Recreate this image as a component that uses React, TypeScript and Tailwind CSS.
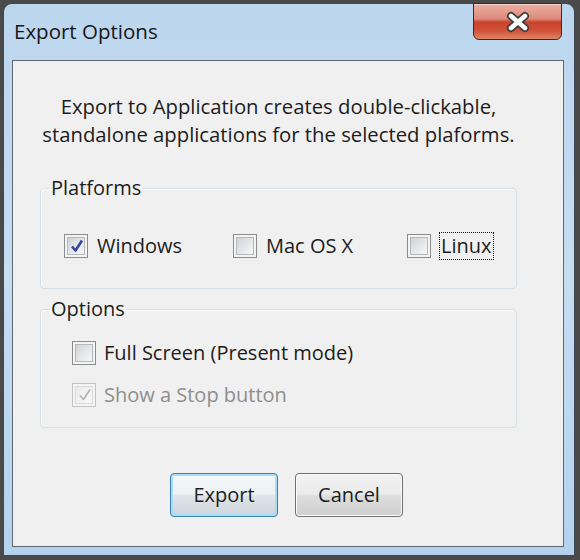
const font = "font-['Open_Sans','Noto_Sans',sans-serif]";

type BoxProps = { checked?: boolean; disabled?: boolean };

const CheckBox = ({ checked, disabled }: BoxProps) => (
  <span
    className={`flex h-[24px] w-[24px] shrink-0 items-center justify-center border p-[2px] ${
      disabled ? "border-[#c2c2c2] bg-[#f4f4f4]" : "border-[#8c8c8c] bg-[#f4f4f4]"
    }`}>
    <span
      className={`relative flex h-full w-full items-center justify-center border ${
        disabled
          ? "border-[#dadada] bg-gradient-to-br from-[#ebebeb] to-[#f8f8f8]"
          : "border-[#b4b8bd] bg-gradient-to-br from-[#cfd3d8] to-[#f8f8f8]"
      }`}>
      {checked && (
        <svg width="16" height="16" viewBox="0 0 16 16" className="absolute left-[1px] top-[0px]">
          <path
            d="M3 8.5 L6.5 12.5 L13 2.5"
            fill="none"
            stroke={disabled ? "#b3b3b3" : "#3446a0"}
            strokeWidth={disabled ? 1.6 : 2.6}
            strokeLinejoin="round"
          />
        </svg>
      )}
    </span>
  </span>
);

const App = () => {
  return (
    <div className={`h-[560px] w-[580px] overflow-hidden bg-[#4a4a4a] pl-[3px] pt-[3px] ${font}`}>
      {/* window frame */}
      <div className="flex h-[553px] w-[572px] flex-col rounded-t-[9px] border border-[#3f4a55] bg-gradient-to-b from-[#bcd6ee] via-[#c6ddf2] to-[#b4d2ee]">
        {/* title bar */}
        <div className="flex h-[56px] shrink-0 items-start justify-between">
          <span className="self-center pb-[2px] pl-[10px] text-[20.5px] leading-none text-[#161616]">Export Options</span>
          <button
            type="button"
            className="mr-[12px] mt-[-1px] flex h-[37px] w-[89px] items-center justify-center rounded-b-[6px] border border-[#43261f] bg-[linear-gradient(to_bottom,#ebb0a3_0%,#dd8b7b_42%,#c9432e_52%,#cf5036_75%,#e08466_100%)] shadow-[inset_0_1px_0_#f5d0c6]">
            <svg width="28" height="22" viewBox="0 0 28 22">
              <path d="M7 5 L21 17 M21 5 L7 17" stroke="#3b3b3b" strokeWidth="8" strokeLinecap="round" />
              <path d="M7 5 L21 17 M21 5 L7 17" stroke="#ffffff" strokeWidth="4.6" strokeLinecap="round" />
            </svg>
          </button>
        </div>

        {/* client area */}
        <div className="mb-[8px] ml-[8px] mr-[10px] flex flex-1 flex-col border border-[#5d6873] bg-[#f0f0f0] text-[20px] text-[#1c1c1c]">
          <div className="ml-[27px] w-[477px] pt-[31px]">
            <p className="text-center text-[20.3px] leading-[28px]">
              Export to Application creates double-clickable,
              <br />
              standalone applications for the selected plaforms.
            </p>

            {/* platforms */}
            <fieldset className="mt-[28px] rounded-[4px] border border-[#d5dfe5] px-[9px] pb-[28px] pt-[32px] shadow-[inset_1px_1px_0_#ffffff]">
              <legend className="px-[1px] leading-[24px]">Platforms</legend>
              <div className="ml-[14px] grid grid-cols-[169px_174px_auto] items-center">
                <label className="flex items-center gap-[9px]">
                  <CheckBox checked />
                  <span className="leading-[24px]">Windows</span>
                </label>
                <label className="flex items-center gap-[9px]">
                  <CheckBox />
                  <span className="leading-[24px]">Mac OS X</span>
                </label>
                <label className="flex items-center gap-[8px]">
                  <CheckBox />
                  <span className="border border-dotted border-[#111] px-[1px] leading-[26px]">Linux</span>
                </label>
              </div>
            </fieldset>

            {/* options */}
            <fieldset className="mt-[8px] rounded-[4px] border border-[#d5dfe5] px-[9px] pb-[20px] pt-[20px] shadow-[inset_1px_1px_0_#ffffff]">
              <legend className="px-[1px] leading-[24px]">Options</legend>
              <div className="ml-[22px] flex flex-col gap-[18px]">
                <label className="flex items-center gap-[8px]">
                  <CheckBox />
                  <span className="leading-[24px]">Full Screen (Present mode)</span>
                </label>
                <label className="flex items-center gap-[8px] text-[#8e8e8e]">
                  <CheckBox checked disabled />
                  <span className="leading-[24px]">Show a Stop button</span>
                </label>
              </div>
            </fieldset>
          </div>

          {/* buttons */}
          <div className="mt-[45px] flex justify-center gap-[17px] pr-[3px]">
            <button
              type="button"
              className="h-[44px] w-[108px] rounded-[4px] border border-[#3c7fb1] bg-[linear-gradient(to_bottom,#f4f8fa_0%,#ecf1f4_48%,#dde3e7_52%,#d0d7dc_100%)] text-[20px] text-[#1c1c1c] shadow-[inset_0_0_0_2px_#a9dcf7]">
              Export
            </button>
            <button
              type="button"
              className="h-[44px] w-[108px] rounded-[4px] border border-[#707070] bg-[linear-gradient(to_bottom,#f2f2f2_0%,#ebebeb_48%,#dddddd_52%,#cfcfcf_100%)] text-[20px] text-[#1c1c1c] shadow-[inset_0_0_0_1px_#fcfcfc]">
              Cancel
            </button>
          </div>
        </div>
      </div>
    </div>
  );
};

export default App;
